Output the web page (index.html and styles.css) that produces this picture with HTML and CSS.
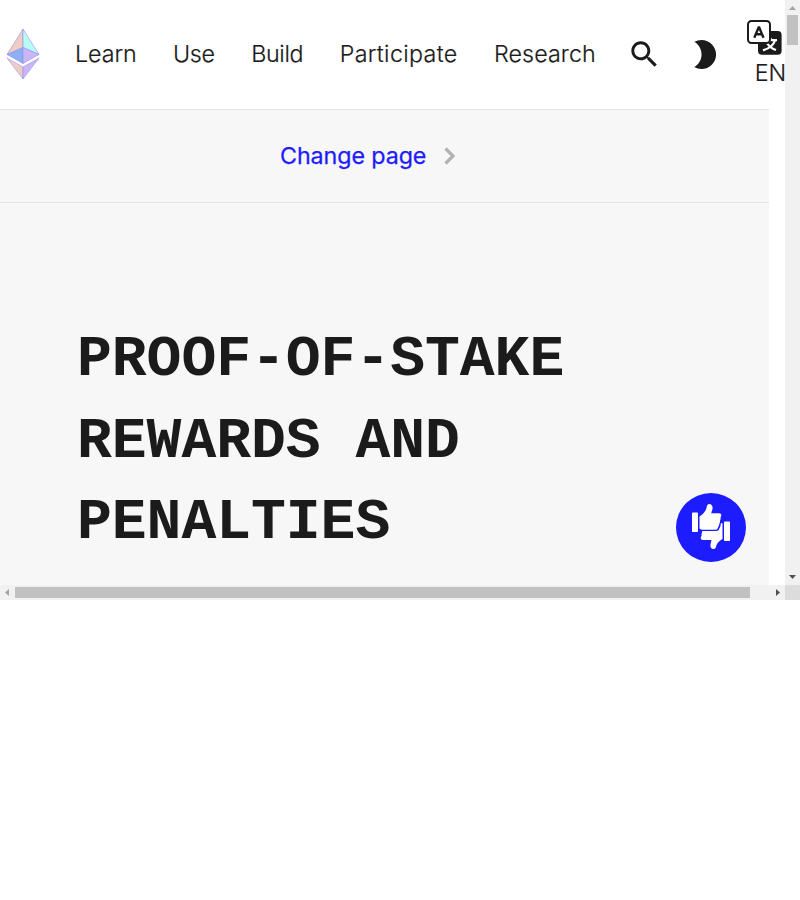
FILE: index.html
```html
<!DOCTYPE html>
<html lang="en">
<head>
<meta charset="utf-8">
<title>Proof-of-stake rewards and penalties</title>
<link rel="stylesheet" href="styles.css">
</head>
<body>
<div class="frame">
  <div class="viewport">
    <header class="header">
      <a class="logo" aria-label="Home">
        <svg width="34" height="52" viewBox="0 0 34 52">
          <g stroke="#8c8cf0" stroke-opacity=".7" stroke-width=".8" stroke-linejoin="round">
            <path fill="#f0cdc2" d="M17 1 1 26.500l16-7z"/>
            <path fill="#b8fbf6" d="M17 1l16 25.500-16-7z"/>
            <path fill="#8db0f3" d="M17 19.500 1 26.500l16 9z"/>
            <path fill="#cbb6f5" d="M17 19.500l16 7-16 9z"/>
            <path fill="#f0cdc2" d="M1 30l16 9v12z"/>
            <path fill="#cbb6f5" d="M33 30l-16 9v12z"/>
          </g>
        </svg>
      </a>
      <nav class="nav">
        <a class="learn">Learn</a><a class="use">Use</a><a class="build">Build</a><a class="participate">Participate</a><a class="research">Research</a>
      </nav>
      <div class="tools">
        <svg class="icon" viewBox="0 0 24 24"><path d="M15.5 14h-.79l-.28-.27C15.41 12.59 16 11.11 16 9.5 16 5.91 13.09 3 9.5 3S3 5.91 3 9.5 5.91 16 9.5 16c1.61 0 3.09-.59 4.23-1.57l.27.28v.79l5 4.99L20.49 19l-4.99-5zm-6 0C7.01 14 5 11.99 5 9.5S7.01 5 9.5 5 14 7.01 14 9.5 11.99 14 9.5 14z"/></svg>
        <svg class="icon" viewBox="0 0 24 24"><path d="M10 2c-1.82 0-3.53.5-5 1.35C7.99 5.08 10 8.3 10 12s-2.01 6.92-5 8.65C6.47 21.5 8.18 22 10 22c5.52 0 10-4.48 10-10S15.52 2 10 2z"/></svg>
        <div class="language">
          <svg width="35" height="35" viewBox="0 0 35 35">
            <rect x="11" y="11" width="23.6" height="23.7" rx="4" fill="#1b1b1b"/>
            <g fill="none" stroke="#fff" stroke-width="2.200">
              <path d="M15.500 20.2h14.500M22.5 17.5l2 2.500M28 20.5c-1.5 5-6 8-12 9.9M20 23.2c2 3 4.500 5.500 9 6.800"/>
            </g>
            <rect x="1" y="1" width="22" height="22" rx="3.500" fill="#fff" stroke="#1b1b1b" stroke-width="2"/>
            <path d="M7.300 17.800 11.900 6.800 16.500 17.800M9 14.300h5.800" fill="none" stroke="#1b1b1b" stroke-width="2.400" stroke-linejoin="bevel"/>
          </svg>
          <span>EN</span>
        </div>
      </div>
    </header>
    <main class="page">
      <div class="change">
        <a>Change page</a>
        <svg width="14" height="20" viewBox="0 0 14 20"><path d="M2.500 2.500 10 10l-7.500 7.500" fill="none" stroke="#b2b2b2" stroke-width="3.200"/></svg>
      </div>
      <h1 class="title">PROOF-OF-STAKE REWARDS AND PENALTIES</h1>
    </main>
    <button class="feedback" aria-label="Feedback">
      <svg width="40" height="48" viewBox="0 0 40 48" fill="#fff">
        <rect x="1" y="9.500" width="6" height="19.500" rx=".8"/>
        <path d="M8.500 26.500V13.500c3.500-2 6-5 7-8.500.5-2.500 1-4 2.800-4 2.500 0 3.700 2.500 3.200 5l-1.300 4.200H28c1.700 0 2.500 1 2.200 2.500-.1 1-.6 1.500-.8 2.100.4 1 .2 2-.5 3 .3 1.200 0 2.200-.7 3 .2 1.200-.2 2.200-1 3-.2 1.700-1.200 3-2.700 3H12c-1.500 0-2.500-.5-3.500-1.300z"/>
        <rect x="33" y="18.500" width="6" height="19.500" rx=".8"/>
        <path d="M31.500 20.500V36c-3.500 1.500-5.500 4.500-6.300 7-.4 2-1 3-2.700 3-2.200 0-3.500-2-3-4.500l1-4.500H12c-1.600 0-2.500-1-2.200-2.500.1-.8.500-1.300.9-1.800-.4-1-.2-2.100.3-2.900-.1-.4 0-.9.300-1.800H25c2 0 3.200-1.200 3.500-3 .8-.8 1.200-1.900 1-3 .3-.7.5-1.300.5-2z"/>
      </svg>
    </button>
  </div>
  <div class="vbar">
    <svg width="15" height="15" viewBox="0 0 15 15"><path fill="#a3a3a3" d="M4 10h7L7.500 6z"/></svg>
    <i></i>
    <svg class="end" width="15" height="15" viewBox="0 0 15 15"><path fill="#505050" d="M4 5h7L7.500 9z"/></svg>
  </div>
  <div class="hbar">
    <svg width="15" height="15" viewBox="0 0 15 15"><path fill="#a3a3a3" d="M9 4v7L5 7.500z"/></svg>
    <i></i>
    <svg class="end" width="15" height="15" viewBox="0 0 15 15"><path fill="#505050" d="M6 4v7l4-3.500z"/></svg>
  </div>
  <div class="corner"></div>
</div>
</body>
</html>
```
FILE: styles.css
```css
* { box-sizing: border-box; }
body {
  margin: 0;
  background: #fff;
  color: #1b1b1b;
  font: 400 23.27px/1.6 Inter, sans-serif;
}
.frame {
  display: grid;
  grid-template: 585px 15px / 785px 15px;
}
.viewport {
  position: relative;
  overflow: hidden;
}
.header {
  display: flex;
  align-items: center;
  width: 820px;
  height: 109px;
  padding-left: 6px;
}
.logo { display: flex; width: 69px; margin-bottom: 1px; }
.nav {
  display: flex;
  gap: 36.4px;
  width: 552px;
  margin-bottom: 2px;
  white-space: nowrap;
  font-weight: 300;
  color: #1b1b1b;
  -webkit-text-stroke: .2px #1b1b1b;
}
.learn { letter-spacing: -.06px; }
.use { letter-spacing: -.3px; }
.build { letter-spacing: -.3px; }
.participate { letter-spacing: .34px; }
.research { letter-spacing: .08px; }
.tools { display: flex; align-items: center; }
.icon {
  width: 34.9px;
  height: 34.9px;
  margin-right: 25.3px;
  fill: #1b1b1b;
}
.language {
  display: flex;
  flex-direction: column;
  height: 69px;
}
.language svg { flex: none; }
.language span {
  padding-left: 7.4px;
  line-height: 36px;
  font-weight: 300;
  -webkit-text-stroke: .2px #1b1b1b;
}
.page {
  width: 769px;
  height: 476px;
  background: #f7f7f7;
  border-top: 1px solid #e5e5e5;
}
.change {
  display: flex;
  align-items: center;
  height: 93px;
  padding-left: 280px;
  gap: 17px;
  color: #1c1cff;
  letter-spacing: -.09px;
  -webkit-text-stroke: .25px #1c1cff;
  border-bottom: 1px solid #e5e5e5;
}
.title {
  width: 600px;
  margin: 116.4px 0 0 77px;
  font: 700 58.1px/81.45px "Liberation Mono", monospace;
  letter-spacing: -.06px;
}
.feedback {
  position: absolute;
  left: 676px;
  top: 493px;
  display: flex;
  align-items: center;
  justify-content: center;
  width: 70px;
  height: 69px;
  padding: 0 0 2px;
  border: 0;
  border-radius: 50%;
  background: #1c1cff;
}
.vbar, .hbar { display: flex; background: #f1f1f1; }
.vbar { flex-direction: column; }
.vbar i { width: 11px; height: 30px; margin-left: 2px; background: #c1c1c1; }
.hbar i { width: 735px; height: 11px; margin-top: 2px; background: #c1c1c1; }
.vbar .end { margin-top: auto; }
.hbar .end { margin-left: auto; }
.corner { background: #dcdcdc; }
```
